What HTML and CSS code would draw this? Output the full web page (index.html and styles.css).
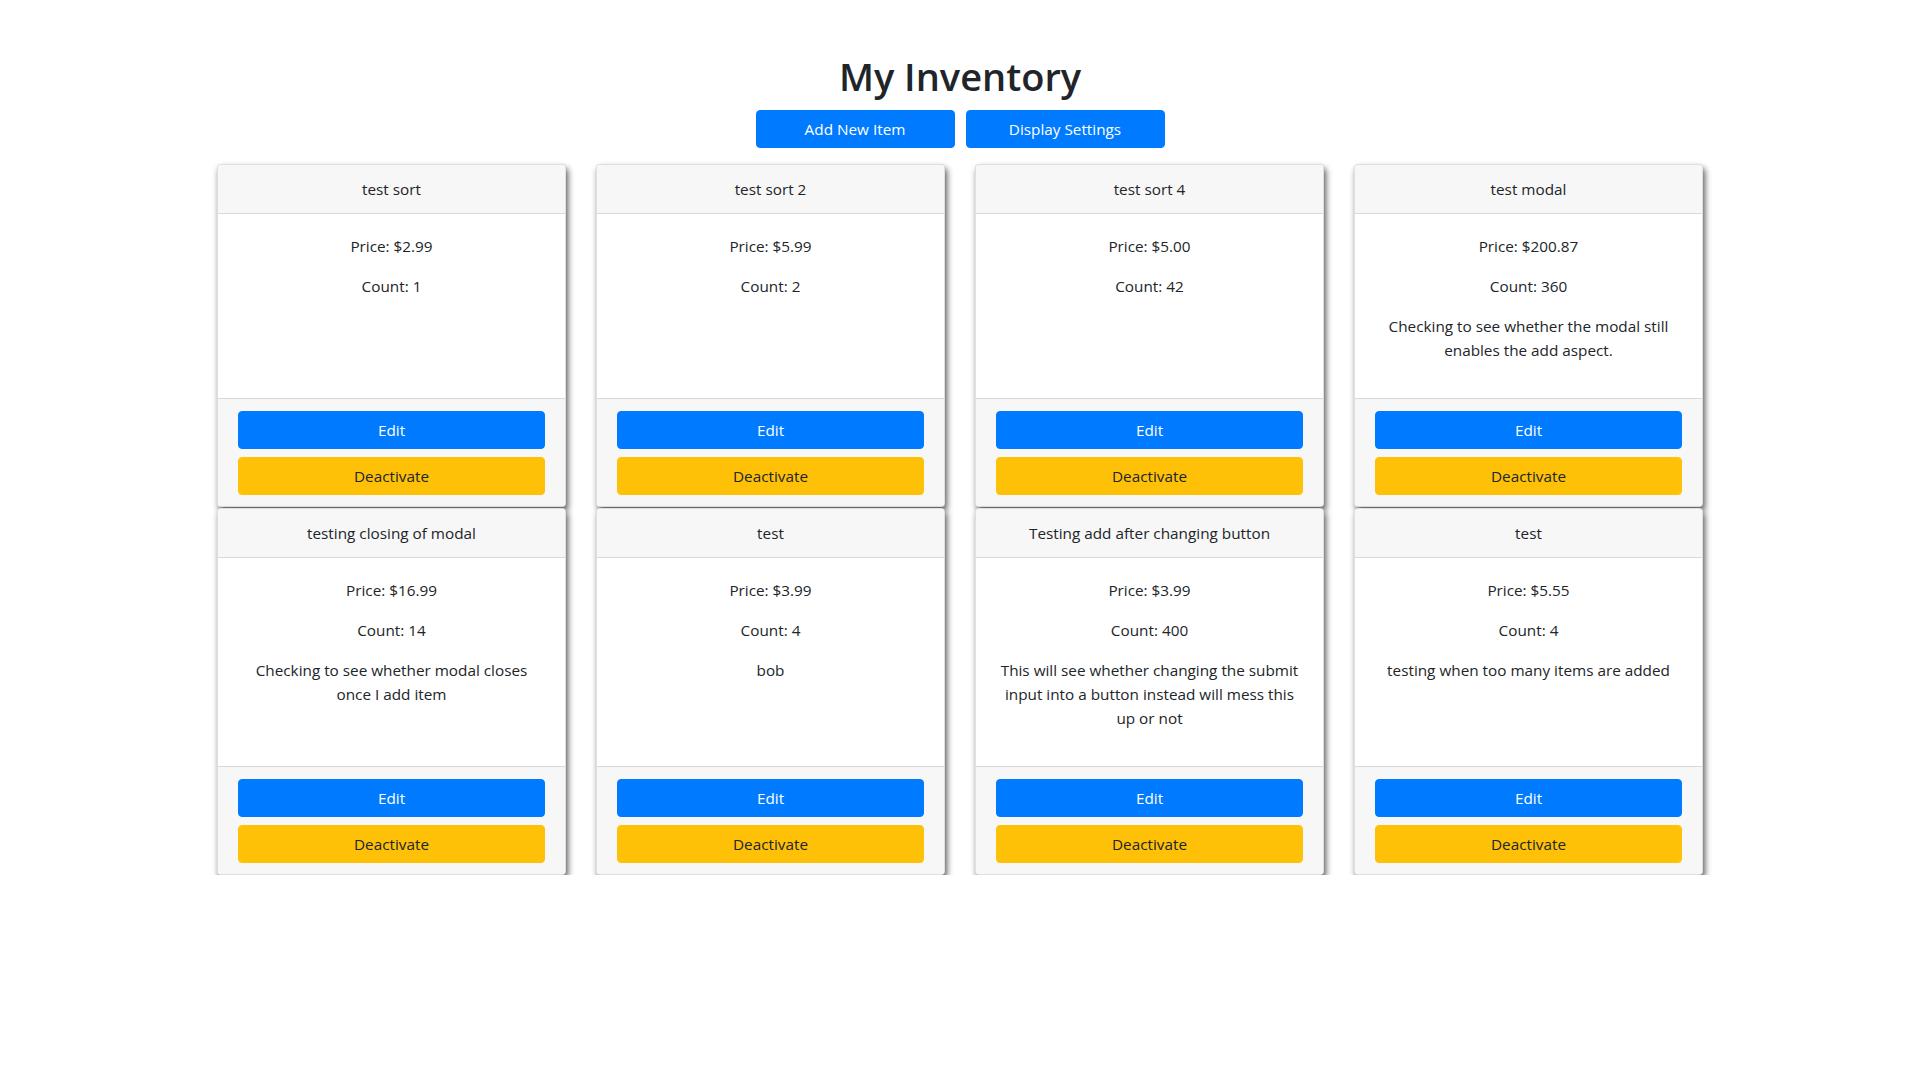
FILE: index.html
```html
<!DOCTYPE html>
<html lang="en">
<head>
<meta charset="utf-8">
<title>My Inventory</title>
<link rel="stylesheet" href="styles.css">
</head>
<body>
<main class="page">
  <h1 class="title">My Inventory</h1>
  <div class="actions">
    <button class="btn btn-primary btn-top">Add New Item</button>
    <button class="btn btn-primary btn-top">Display Settings</button>
  </div>
  <div class="grid">
    <div class="card">
      <div class="card-header">test sort</div>
      <div class="card-body"><p>Price: $2.99</p><p>Count: 1</p></div>
      <div class="card-footer"><button class="btn btn-primary">Edit</button><button class="btn btn-warning">Deactivate</button></div>
    </div>
    <div class="card">
      <div class="card-header">test sort 2</div>
      <div class="card-body"><p>Price: $5.99</p><p>Count: 2</p></div>
      <div class="card-footer"><button class="btn btn-primary">Edit</button><button class="btn btn-warning">Deactivate</button></div>
    </div>
    <div class="card">
      <div class="card-header">test sort 4</div>
      <div class="card-body"><p>Price: $5.00</p><p>Count: 42</p></div>
      <div class="card-footer"><button class="btn btn-primary">Edit</button><button class="btn btn-warning">Deactivate</button></div>
    </div>
    <div class="card">
      <div class="card-header">test modal</div>
      <div class="card-body"><p>Price: $200.87</p><p>Count: 360</p><p>Checking to see whether the modal still enables the add aspect.</p></div>
      <div class="card-footer"><button class="btn btn-primary">Edit</button><button class="btn btn-warning">Deactivate</button></div>
    </div>
    <div class="card">
      <div class="card-header">testing closing of modal</div>
      <div class="card-body"><p>Price: $16.99</p><p>Count: 14</p><p>Checking to see whether modal closes once I add item</p></div>
      <div class="card-footer"><button class="btn btn-primary">Edit</button><button class="btn btn-warning">Deactivate</button></div>
    </div>
    <div class="card">
      <div class="card-header">test</div>
      <div class="card-body"><p>Price: $3.99</p><p>Count: 4</p><p>bob</p></div>
      <div class="card-footer"><button class="btn btn-primary">Edit</button><button class="btn btn-warning">Deactivate</button></div>
    </div>
    <div class="card">
      <div class="card-header">Testing add after changing button</div>
      <div class="card-body"><p>Price: $3.99</p><p>Count: 400</p><p>This will see whether changing the submit input into a button instead will mess this up or not</p></div>
      <div class="card-footer"><button class="btn btn-primary">Edit</button><button class="btn btn-warning">Deactivate</button></div>
    </div>
    <div class="card">
      <div class="card-header">test</div>
      <div class="card-body"><p>Price: $5.55</p><p>Count: 4</p><p>testing when too many items are added</p></div>
      <div class="card-footer"><button class="btn btn-primary">Edit</button><button class="btn btn-warning">Deactivate</button></div>
    </div>
  </div>
</main>
</body>
</html>
```
FILE: styles.css
```css
* { box-sizing: border-box; }
html, body { margin: 0; padding: 0; background: #fff; }
body {
  font-family: "Segoe UI", "Open Sans", "Noto Sans", sans-serif;
  font-size: 15.3px;
  line-height: 24px;
  color: #212529;
}
.page {
  width: 1486px;
  margin: 0 auto;
  padding-top: 52px;
  display: flex;
  flex-direction: column;
  align-items: center;
}
.title {
  margin: 0 0 10px;
  font-size: 38px;
  line-height: 48px;
  font-weight: 600;
}
.actions {
  display: flex;
  gap: 11px;
  margin-bottom: 16px;
}
.btn {
  display: block;
  font-family: inherit;
  font-size: 15.3px;
  line-height: 24px;
  padding: 6px 12px;
  border: 1px solid transparent;
  border-radius: 4px;
  text-align: center;
  cursor: pointer;
}
.btn-top { width: 199px; }
.btn-primary { background: #007bff; border-color: #007bff; color: #fff; }
.btn-warning { background: #ffc107; border-color: #ffc107; color: #212529; }
.grid {
  width: 100%;
  display: grid;
  grid-template-columns: repeat(4, 349px);
  column-gap: 30px;
  row-gap: 1px;
}
.card {
  display: flex;
  flex-direction: column;
  background: #fff;
  border: 1px solid rgba(0,0,0,0.125);
  border-radius: 4px;
  box-shadow: 2px 4px 6px rgba(0,0,0,0.65);
  text-align: center;
  overflow: hidden;
}
.card-header {
  padding: 12px 20px;
  background: #f7f7f7;
  border-bottom: 1px solid rgba(0,0,0,0.125);
}
.card-body {
  flex: 1;
  padding: 20px;
}
.card-body p { margin: 0 0 16px; }
.card-footer {
  padding: 12px 20px 11px;
  background: #f7f7f7;
  border-top: 1px solid rgba(0,0,0,0.125);
  display: flex;
  flex-direction: column;
  gap: 8px;
}
.card-footer .btn { width: 100%; }
```
